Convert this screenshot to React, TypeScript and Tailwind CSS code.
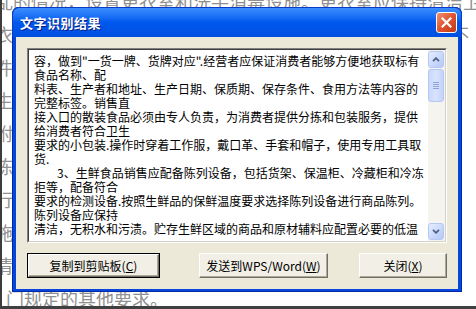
import React from "react";

const textLines: { indent?: boolean; t: string }[] = [
  { t: '容，做到"一货一牌、货牌对应".经营者应保证消费者能够方便地获取标有' },
  { t: "食品名称、配" },
  { t: "料表、生产者和地址、生产日期、保质期、保存条件、食用方法等内容的" },
  { t: "完整标签。销售直" },
  { t: "接入口的散装食品必须由专人负责，为消费者提供分拣和包装服务，提供" },
  { t: "给消费者符合卫生" },
  { t: "要求的小包装.操作时穿着工作服，戴口革、手套和帽子，使用专用工具取" },
  { t: "货." },
  { indent: true, t: "3、生鲜食品销售应配备陈列设备，包括货架、保温柜、冷藏柜和冷冻" },
  { t: "拒等，配备符合" },
  { t: "要求的检测设备.按照生鲜品的保鲜温度要求选择陈列设备进行商品陈列。" },
  { t: "陈列设备应保持" },
  { t: "清洁，无积水和污渍。贮存生鲜区域的商品和原材辅料应配置必要的低温" },
];

const docLines = [
  "乱的情况，设置更衣室和洗手消毒设施。更衣室应保持清洁卫生，",
  "衣物存放柜与工作区分开设置，做到生熟分开，设置专门]不",
  "件设备设施应当符合食品安全要求，配备相应的消毒",
  "生鲜区域的工作人员应当保持个人卫生，穿戴清洁的",
  "附近设置冷藏设施，防止食品腐败变质，并定期清洁云",
  "陈列区域应保持整洁，避免食品交叉污染，定期开展灭",
  "行检查，发现问题及时处理，并做好相应记录，核对",
  "施，保证设施正常运转，确保食品温度控制符合要更",
  "清洁消毒，定期检查设备的运行状况，做好维护保养",
  "门规定的其他要求。",
];

const ScrollBtn = ({ dir }: { dir: "up" | "down" }) => (
  <div className="h-[17px] w-[16px] rounded-[3px] border border-[#B5C8F3] bg-gradient-to-br from-[#E6EEFF] via-[#CCDAFD] to-[#B4C8F6] flex items-center justify-center">
    <svg width="8" height="5" viewBox="0 0 8 5">
      {dir === "up" ? (
        <path d="M1 4.2 L4 1.2 L7 4.2" fill="none" stroke="#4D6185" strokeWidth="1.8" />
      ) : (
        <path d="M1 0.8 L4 3.8 L7 0.8" fill="none" stroke="#4D6185" strokeWidth="1.8" />
      )}
    </svg>
  </div>
);

const Btn = ({
  w,
  def,
  children,
}: {
  w: string;
  def?: boolean;
  children: React.ReactNode;
}) => (
  <div className={`${w} h-[25px] ${def ? "border border-black" : ""}`}>
    <div className="h-full w-full border-t border-l border-t-white border-l-white border-r border-b border-r-[#716F64] border-b-[#716F64] bg-[#F1EFE6] shadow-[inset_-1px_-1px_0_#ACA899] flex items-center justify-center text-[12px] text-black leading-none">
      {children}
    </div>
  </div>
);

export default function App() {
  return (
    <div
      className="relative w-[476px] h-[309px] overflow-hidden bg-white"
      style={{ fontFamily: '"Noto Sans CJK SC", "Noto Sans", sans-serif' }}
    >
      {/* background document */}
      <div className="flex flex-col h-full">
        <div className="flex flex-1 overflow-hidden">
          <div className="w-[2px] bg-[#3C3C3C]" />
          <div className="flex-1 overflow-hidden -mt-[15px] text-[#909090]">
            {docLines.map((l, i) => (
              <div
                key={i}
                className={`h-[33px] leading-[33px] text-[18px] whitespace-nowrap ${
                  i === docLines.length - 1 ? "pl-[4px]" : "-ml-[7px]"
                }`}
              >
                {l}
              </div>
            ))}
          </div>
        </div>
        <div className="h-[3px] bg-[#404040]" />
      </div>

      {/* dialog window */}
      <div className="absolute left-[12px] top-[7px] w-[450px] h-[285px] flex flex-col rounded-t-[7px] bg-[#0646DA] shadow-[inset_0_0_0_1px_#0029A8]">
        {/* title bar */}
        <div className="h-[30px] shrink-0 rounded-t-[7px] bg-gradient-to-b from-[#3B8EFF] via-[#0058EE] to-[#0050E0] flex items-center pl-[7px] pr-[4px] border border-b-0 border-[#0A3BC4]">
          <span className="text-white font-bold text-[13px] tracking-[0.5px] [text-shadow:1px_1px_0_#0A1E80]">
            文字识别结果
          </span>
          <div className="ml-auto w-[21px] h-[21px] rounded-[3px] border border-white bg-gradient-to-br from-[#F0906E] via-[#E0522E] to-[#C23A12] flex items-center justify-center">
            <svg width="11" height="11" viewBox="0 0 11 11">
              <path d="M1.5 1.5 L9.5 9.5 M9.5 1.5 L1.5 9.5" stroke="white" strokeWidth="2.2" strokeLinecap="square" />
            </svg>
          </div>
        </div>

        {/* body */}
        <div className="flex-1 mx-[4px] mb-[4px] bg-[#ECE9D8] px-[11px] pt-[11px] pb-[11px] flex flex-col">
          {/* text box */}
          <div className="h-[195px] border-t border-l border-t-[#808080] border-l-[#808080] border-b border-r border-b-white border-r-white">
            <div className="h-full border-t border-l border-t-[#404040] border-l-[#404040] border-b border-r border-b-[#D4D0C8] border-r-[#D4D0C8] bg-white flex">
              <div className="flex-1 overflow-hidden pl-[5px] pt-[4px] text-[12px] leading-[14px] text-black">
                {textLines.map((l, i) => (
                  <div key={i} className="h-[14px] whitespace-nowrap">
                    {l.indent && <span className="inline-block w-[23px]" />}
                    {l.t}
                  </div>
                ))}
              </div>
              <div className="w-[17px] flex flex-col bg-[#F5F4EF] pt-[1px] pb-[1px]">
                <ScrollBtn dir="up" />
                <div className="mt-[1px] h-[33px] w-[16px] rounded-[3px] border border-[#B5C8F3] bg-gradient-to-r from-[#C9D8FC] via-[#D8E3FE] to-[#C2D3FB] flex flex-col items-center justify-center gap-[1px]">
                  <div className="w-[6px] h-[1px] bg-[#8CA3D8]" />
                  <div className="w-[6px] h-[1px] bg-[#8CA3D8]" />
                  <div className="w-[6px] h-[1px] bg-[#8CA3D8]" />
                  <div className="w-[6px] h-[1px] bg-[#8CA3D8]" />
                </div>
                <div className="flex-1" />
                <ScrollBtn dir="down" />
              </div>
            </div>
          </div>

          {/* buttons */}
          <div className="mt-[10px] flex items-center">
            <Btn w="w-[133px]" def>
              复制到剪贴板(<span className="underline">C</span>)
            </Btn>
            <div className="ml-[39px]">
              <Btn w="w-[129px]">
                发送到WPS/Word(<span className="underline">W</span>)
              </Btn>
            </div>
            <div className="ml-[31px]">
              <Btn w="w-[88px]">
                关闭(<span className="underline">X</span>)
              </Btn>
            </div>
          </div>
        </div>
      </div>
    </div>
  );
}
